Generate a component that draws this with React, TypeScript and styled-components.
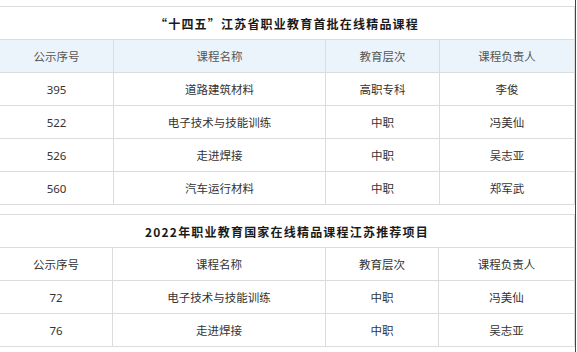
import React from "react";
import styled, { createGlobalStyle } from "styled-components";

const Global = createGlobalStyle`
  html, body { margin: 0; padding: 0; background: #fff; }
  body { font-family: "Noto Sans", "Noto Sans CJK SC", sans-serif; }
`;

const Page = styled.div`
  width: 576px;
  height: 352px;
  border-right: 1px solid #a8142c;
  padding-top: 6px;
  box-sizing: border-box;
  overflow: hidden;
`;

const Table = styled.div`
  width: 575px;
  border-top: 1px solid #dcdcdc;
  margin-bottom: 9px;
`;

const TitleRow = styled.div`
  height: 32px;
  border-bottom: 1px solid #dcdcdc;
  border-right: 1px solid #dcdcdc;
  display: flex;
  align-items: center;
  justify-content: center;
  font-family: "Noto Sans CJK SC", sans-serif;
  font-weight: 700;
  font-size: 12px;
  letter-spacing: 1.2px;
  color: #1a1a1a;
`;

const Row = styled.div<{ $cols: string; $head?: boolean }>`
  display: grid;
  grid-template-columns: ${(p) => p.$cols};
  height: 33px;
  background: ${(p) => (p.$head ? "#ebf3fb" : "#fff")};
  color: ${(p) => (p.$head ? "#555" : "#333")};
`;

const Cell = styled.div`
  border-right: 1px solid #dcdcdc;
  border-bottom: 1px solid #dcdcdc;
  display: flex;
  align-items: center;
  justify-content: center;
  font-family: "Noto Sans", "Noto Sans CJK SC", sans-serif;
  font-size: 11.5px;
`;

const head = ["公示序号", "课程名称", "教育层次", "课程负责人"];

const t1 = [
  ["395", "道路建筑材料", "高职专科", "李俊"],
  ["522", "电子技术与技能训练", "中职", "冯美仙"],
  ["526", "走进焊接", "中职", "吴志亚"],
  ["560", "汽车运行材料", "中职", "郑军武"],
];

const t2 = [
  ["72", "电子技术与技能训练", "中职", "冯美仙"],
  ["76", "走进焊接", "中职", "吴志亚"],
];

function CourseTable({
  title,
  rows,
  cols,
  blueHead,
}: {
  title: string;
  rows: string[][];
  cols: string;
  blueHead: boolean;
}) {
  return (
    <Table>
      <TitleRow>{title}</TitleRow>
      <Row $cols={cols} $head={blueHead}>
        {head.map((h) => (
          <Cell key={h}>{h}</Cell>
        ))}
      </Row>
      {rows.map((r) => (
        <Row $cols={cols} key={r[0]}>
          {r.map((c, i) => (
            <Cell key={i}>{c}</Cell>
          ))}
        </Row>
      ))}
    </Table>
  );
}

export default function App() {
  return (
    <>
      <Global />
      <Page>
        <CourseTable
          title="“十四五”江苏省职业教育首批在线精品课程"
          rows={t1}
          cols="114px 212px 114px 135px"
          blueHead
        />
        <CourseTable
          title="2022年职业教育国家在线精品课程江苏推荐项目"
          rows={t2}
          cols="113px 213px 113px 136px"
          blueHead={false}
        />
      </Page>
    </>
  );
}
